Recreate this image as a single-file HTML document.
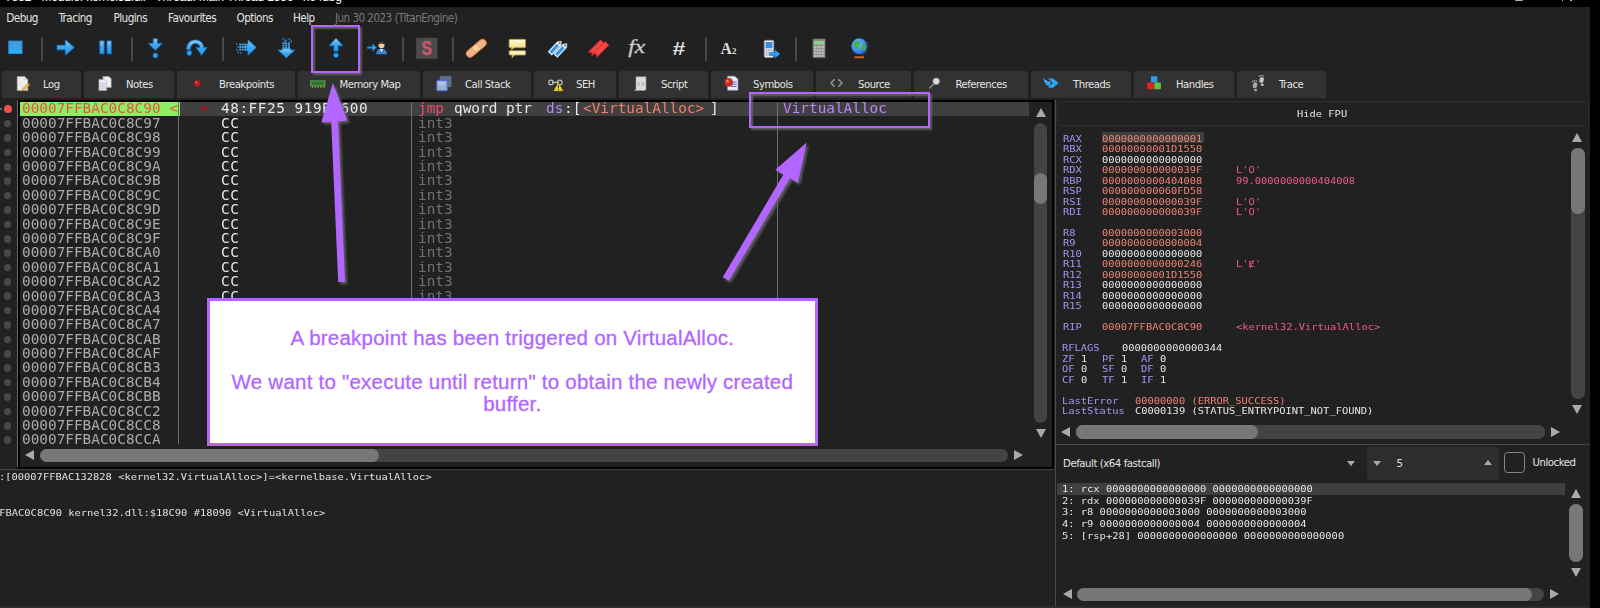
<!DOCTYPE html>
<html><head><meta charset="utf-8"><title>x64dbg</title>
<style>
html,body{margin:0;padding:0}
body{width:1600px;height:608px;overflow:hidden;position:relative;background:#212121;font-family:"DejaVu Sans Condensed","DejaVu Sans","Liberation Sans",sans-serif;font-stretch:condensed;color:#e0e0e0}
.a{position:absolute}
.ui{font-size:11.3px;letter-spacing:-0.45px;white-space:nowrap;color:#e4e4e4}
.m{font-family:"DejaVu Sans Mono","Liberation Mono",monospace;white-space:pre}
.d{font-size:13.3px;letter-spacing:0;transform:scaleX(1.0816);transform-origin:0 0;line-height:14.39px;height:14.39px}
.r{font-size:9.5px;letter-spacing:0;transform:scaleX(1.0963);transform-origin:0 0;line-height:10.4px;height:10.4px}
.tab{position:absolute;top:70.8px;height:27.1px;background:#323232;border-radius:3px 3px 0 0}
.tab span{position:absolute;top:7px}
.sep{position:absolute;top:37px;width:2px;height:24px;background:#484848;margin-left:-0.5px}
.vl{position:absolute;width:1px;background:#6e6e6e}
.bul{position:absolute;left:3.6px;width:7.6px;height:7.6px;border-radius:50%;background:#484848}
.tri{position:absolute;width:0;height:0}
</style></head><body>

<div class="a" style="left:0;top:0;width:1600px;height:7.4px;background:#000;overflow:hidden"><div class="a" style="left:5.3px;top:-9.6px;font:12px 'Liberation Sans',sans-serif;color:#fff;white-space:nowrap;line-height:14px;letter-spacing:-0.17px">7852 - Module: kernel32.dll - Thread: Main Thread 1556 - x64dbg</div></div>
<div class="a" style="left:1515px;top:0;width:8px;height:1.3px;background:#b0b0b0;border-radius:0 0 1px 1px"></div><div class="a" style="left:1561.8px;top:0;width:1.3px;height:1px;background:#bbb"></div><div class="a" style="left:1570.4px;top:0;width:1.3px;height:1px;background:#bbb"></div>
<div class="a" style="left:1590px;top:0;width:10px;height:608px;background:#000"></div>
<div class="a ui" style="left:6.3px;top:10.7px;font-size:11.6px;letter-spacing:-0.55px;line-height:15px">Debug</div>
<div class="a ui" style="left:58.5px;top:10.7px;font-size:11.6px;letter-spacing:-0.55px;line-height:15px">Tracing</div>
<div class="a ui" style="left:113.5px;top:10.7px;font-size:11.6px;letter-spacing:-0.55px;line-height:15px">Plugins</div>
<div class="a ui" style="left:168px;top:10.7px;font-size:11.6px;letter-spacing:-0.55px;line-height:15px">Favourites</div>
<div class="a ui" style="left:236.5px;top:10.7px;font-size:11.6px;letter-spacing:-0.55px;line-height:15px">Options</div>
<div class="a ui" style="left:293px;top:10.7px;font-size:11.6px;letter-spacing:-0.55px;line-height:15px">Help</div>
<div class="a ui" style="left:335px;top:10.7px;font-size:11.6px;letter-spacing:-0.55px;line-height:15px;color:#7a7a7a">Jun 30 2023 (TitanEngine)</div>
<div class="sep" style="left:41px"></div>
<div class="sep" style="left:131px"></div>
<div class="sep" style="left:222px"></div>
<div class="sep" style="left:402px"></div>
<div class="sep" style="left:452px"></div>
<div class="sep" style="left:705px"></div>
<div class="sep" style="left:795px"></div>
<!--ICONS-->
<div class="tab" style="left:2px;width:79px"><span class="ui" style="left:41px;font-size:11.2px">Log</span></div>
<div class="tab" style="left:84px;width:90px"><span class="ui" style="left:42px;font-size:11.2px">Notes</span></div>
<div class="tab" style="left:177px;width:117.5px"><span class="ui" style="left:42px;font-size:11.2px">Breakpoints</span></div>
<div class="tab" style="left:297.5px;width:122.5px"><span class="ui" style="left:42.0px;font-size:11.2px">Memory Map</span></div>
<div class="tab" style="left:423px;width:108px"><span class="ui" style="left:42px;font-size:11.2px">Call Stack</span></div>
<div class="tab" style="left:534px;width:82px"><span class="ui" style="left:42px;font-size:11.2px">SEH</span></div>
<div class="tab" style="left:619px;width:89px"><span class="ui" style="left:42px;font-size:11.2px">Script</span></div>
<div class="tab" style="left:711px;width:101.5px"><span class="ui" style="left:42px;font-size:11.2px">Symbols</span></div>
<div class="tab" style="left:815.5px;width:95.5px"><span class="ui" style="left:42.5px;font-size:11.2px">Source</span></div>
<div class="tab" style="left:914px;width:113.5px"><span class="ui" style="left:41.5px;font-size:11.2px">References</span></div>
<div class="tab" style="left:1030.5px;width:100.0px"><span class="ui" style="left:42.5px;font-size:11.2px">Threads</span></div>
<div class="tab" style="left:1133.5px;width:100.5px"><span class="ui" style="left:42.5px;font-size:11.2px">Handles</span></div>
<div class="tab" style="left:1237px;width:89px"><span class="ui" style="left:42px;font-size:11.2px">Trace</span></div>
<svg class="a" style="left:0;top:0" width="1600" height="100" viewBox="0 0 1600 100">
<defs>
<linearGradient id="gb" x1="0" y1="0" x2="0" y2="1"><stop offset="0" stop-color="#8fd0fa"/><stop offset="0.5" stop-color="#3fa6ee"/><stop offset="1" stop-color="#1a9bf5"/></linearGradient>
<linearGradient id="gs" x1="0" y1="0" x2="0" y2="1"><stop offset="0" stop-color="#4a9bdc"/><stop offset="0.45" stop-color="#3a9fe8"/><stop offset="1" stop-color="#2bb6ff"/></linearGradient>
<linearGradient id="gy" x1="0" y1="0" x2="0" y2="1"><stop offset="0" stop-color="#fdfbd8"/><stop offset="1" stop-color="#e9dc7a"/></linearGradient>
<radialGradient id="gg" cx="0.4" cy="0.35" r="0.7"><stop offset="0" stop-color="#7cc8ff"/><stop offset="1" stop-color="#1565d8"/></radialGradient>
</defs>
<rect x="8.7" y="41" width="13.4" height="12.7" fill="url(#gs)" stroke="#2a86d0" stroke-width="0.8"/>
<path d="M57 45.2 H65.3 V39.8 L74.3 47.5 L65.3 55.2 V49.8 H57 Z" fill="url(#gb)" stroke="#1874c4" stroke-width="0.8" stroke-linejoin="round"/>
<rect x="99.8" y="40.9" width="4.3" height="12.9" fill="url(#gb)" stroke="#1874c4" stroke-width="0.8" stroke-linejoin="round"/><rect x="107" y="40.9" width="4.3" height="12.9" fill="url(#gb)" stroke="#1874c4" stroke-width="0.8" stroke-linejoin="round"/>
<path d="M153.2 38.8 H157.3 V43.4 H162.2 L155.25 50.6 L148.3 43.4 H153.2 Z" fill="url(#gb)" stroke="#1874c4" stroke-width="0.8" stroke-linejoin="round"/><circle cx="155.4" cy="55.5" r="2.4" fill="#2aa5f8" stroke="#1874c4" stroke-width="0.8" stroke-linejoin="round"/>
<path d="M186.6 49.6 C186.6 43.5 190.4 39.9 195.3 39.9 C200 39.9 203.4 43 203.7 47.6 L207 47.6 L201.6 55.2 L196.2 47.6 L200 47.6 C199.8 45 198 43.6 195.3 43.6 C192.4 43.6 190.4 45.9 190.4 49.6 Z" fill="url(#gb)" stroke="#1874c4" stroke-width="0.8" stroke-linejoin="round"/><circle cx="189.3" cy="53" r="2.4" fill="#2aa5f8" stroke="#1874c4" stroke-width="0.8" stroke-linejoin="round"/>
<path d="M246.3 44 H248 V39.7 L256.3 47.5 L248 55.3 V51 H246.3 Z" fill="url(#gb)" stroke="#1874c4" stroke-width="0.8" stroke-linejoin="round"/>
<rect x="239.3" y="43.6" width="1.9" height="1.9" fill="#46a8f0"/>
<rect x="241.7" y="43.6" width="1.9" height="1.9" fill="#46a8f0"/>
<rect x="244.1" y="43.6" width="1.9" height="1.9" fill="#46a8f0"/>
<rect x="239.3" y="46.1" width="1.9" height="1.9" fill="#46a8f0"/>
<rect x="241.7" y="46.1" width="1.9" height="1.9" fill="#46a8f0"/>
<rect x="244.1" y="46.1" width="1.9" height="1.9" fill="#46a8f0"/>
<rect x="239.3" y="48.6" width="1.9" height="1.9" fill="#46a8f0"/>
<rect x="241.7" y="48.6" width="1.9" height="1.9" fill="#46a8f0"/>
<rect x="244.1" y="48.6" width="1.9" height="1.9" fill="#46a8f0"/>
<rect x="236" y="43.2" width="1.5" height="1.5" fill="#2f8fdc"/>
<rect x="237.2" y="46.2" width="1.5" height="1.5" fill="#2f8fdc"/>
<rect x="236.2" y="49" width="1.5" height="1.5" fill="#2f8fdc"/>
<rect x="237.6" y="51.6" width="1.5" height="1.5" fill="#2f8fdc"/>
<rect x="240" y="52.2" width="1.5" height="1.5" fill="#2f8fdc"/>
<path d="M282.2 50 V48.6 H290.6 V50 H294.7 L286.4 57.9 L278 50 Z" fill="url(#gb)" stroke="#1874c4" stroke-width="0.8" stroke-linejoin="round"/>
<rect x="282.5" y="42.3" width="2" height="1.9" fill="#46a8f0"/>
<rect x="285.2" y="42.3" width="2" height="1.9" fill="#46a8f0"/>
<rect x="287.9" y="42.3" width="2" height="1.9" fill="#46a8f0"/>
<rect x="282.5" y="44.6" width="2" height="1.9" fill="#46a8f0"/>
<rect x="285.2" y="44.6" width="2" height="1.9" fill="#46a8f0"/>
<rect x="287.9" y="44.6" width="2" height="1.9" fill="#46a8f0"/>
<rect x="282.5" y="46.9" width="2" height="1.9" fill="#46a8f0"/>
<rect x="285.2" y="46.9" width="2" height="1.9" fill="#46a8f0"/>
<rect x="287.9" y="46.9" width="2" height="1.9" fill="#46a8f0"/>
<rect x="282.6" y="38.2" width="1.6" height="1.6" fill="#2f8fdc"/>
<rect x="285.4" y="39.6" width="1.6" height="1.6" fill="#2f8fdc"/>
<rect x="288.6" y="38.6" width="1.6" height="1.6" fill="#2f8fdc"/>
<rect x="290.4" y="40.6" width="1.6" height="1.6" fill="#2f8fdc"/>
<rect x="284" y="40.6" width="1.6" height="1.6" fill="#2f8fdc"/>
<path d="M336 38.2 L343 45.8 H338.1 V51.3 H333.9 V45.8 H329 Z" fill="url(#gb)" stroke="#1874c4" stroke-width="0.8" stroke-linejoin="round"/><circle cx="336" cy="55.3" r="2.3" fill="#2aa5f8" stroke="#1874c4" stroke-width="0.8" stroke-linejoin="round"/>
<path d="M367.3 46.8 H372.5 V44 L376.5 47.6 L372.5 51.2 V48.4 H367.3 Z" fill="#2aa5f8" stroke="#1874c4" stroke-width="0.5"/>
<circle cx="381.5" cy="45.3" r="3" fill="#f3c9a0"/><path d="M378.3 44.6 C378.3 41.4 384.7 41.4 384.7 44.6 C383.5 43.3 379.5 43.3 378.3 44.6 Z" fill="#3a2a1c"/>
<path d="M376.3 54.3 C376.3 50 379 48.8 381.5 48.8 C384 48.8 386.8 50 386.8 54.3 Z" fill="#3f83cf"/><path d="M380.2 48.9 L381.5 52.5 L382.8 48.9 Z" fill="#fff"/>
<rect x="416.2" y="37.8" width="21.3" height="21" fill="#4b4b4b"/>
<text transform="translate(426.6 55.3) scale(0.76 1)" x="0" y="0" text-anchor="middle" font-family="Liberation Sans,sans-serif" font-weight="bold" font-size="20.5" fill="#c4566a" stroke="#c4566a" stroke-width="0.6">S</text>
<g transform="rotate(-40 476.3 48.3)"><rect x="464.3" y="44.5" width="24" height="7.6" rx="3.8" fill="#f2b389" stroke="#c77b4e" stroke-width="0.9"/><rect x="473.2" y="45.3" width="6" height="6" fill="#f9cfa0" stroke="#e79a5d" stroke-width="0.5"/></g>
<path d="M510 39.3 H524.7 Q525.6 39.3 525.6 40.2 V46.8 Q525.6 47.7 524.7 47.7 H514 L511.3 50 L511.6 47.7 H510 Q509.1 47.7 509.1 46.8 V40.2 Q509.1 39.3 510 39.3 Z" fill="url(#gy)" stroke="#b98a2e" stroke-width="0.8"/>
<path d="M510 50.7 H524.7 Q525.6 50.7 525.6 51.6 V54.2 Q525.6 55.1 524.7 55.1 H514.5 L512 58 L512.2 55.1 H510 Q509.1 55.1 509.1 54.2 V51.6 Q509.1 50.7 510 50.7 Z" fill="url(#gy)" stroke="#b98a2e" stroke-width="0.8"/>
<g transform="translate(0,0.0) rotate(-47 555 48)"><path d="M547.5 45.4 H561 L564.3 48 L561 50.6 H547.5 Z" fill="#eef4fa" stroke="#c8d3de" stroke-width="0.5"/><rect x="548.6" y="46.5" width="10.8" height="3" fill="#2b95e8"/><circle cx="561.7" cy="48" r="0.9" fill="#555"/></g>
<g transform="translate(5.6,2.352) rotate(-47 555 48)"><path d="M547.5 45.4 H561 L564.3 48 L561 50.6 H547.5 Z" fill="#eef4fa" stroke="#c8d3de" stroke-width="0.5"/><rect x="548.6" y="46.5" width="10.8" height="3" fill="#2b95e8"/><circle cx="561.7" cy="48" r="0.9" fill="#555"/></g>
<g transform="translate(0,0.0) rotate(-45 596 48)"><path d="M587.5 45.4 H605 V50.8 H587.5 L589.8 48.1 Z" fill="#f24848" stroke="#c61a1a" stroke-width="0.7"/></g>
<g transform="translate(4.6,1.6099999999999999) rotate(-45 596 48)"><path d="M587.5 45.4 H605 V50.8 H587.5 L589.8 48.1 Z" fill="#f24848" stroke="#c61a1a" stroke-width="0.7"/></g>
<text transform="translate(628.3 53) scale(1.2 1)" x="0" y="0" font-family="Liberation Serif,serif" font-style="italic" font-size="19.5" fill="#c8c8c8" stroke="#c8c8c8" stroke-width="0.35">fx</text>
<text transform="translate(672.6 55.2) scale(1.22 1)" x="0" y="0" font-family="Liberation Sans,sans-serif" font-weight="bold" font-size="19" fill="#dcdcdc">#</text>
<text x="720.5" y="54" font-family="Liberation Serif,serif" font-weight="bold" font-size="15.8" fill="#dedede">A</text><text x="732" y="54" font-family="Liberation Serif,serif" font-weight="bold" font-size="9" fill="#dedede">2</text>
<rect x="764.2" y="40.3" width="9.6" height="17.2" rx="1.4" fill="#e6e9ee" stroke="#8a8f99" stroke-width="0.8"/><rect x="765.6" y="42" width="6.8" height="6.2" fill="#3b8fe0"/>
<rect x="765.7" y="49.6" width="1.7" height="1.4" fill="#9aa0aa"/>
<rect x="768.2" y="49.6" width="1.7" height="1.4" fill="#9aa0aa"/>
<rect x="770.7" y="49.6" width="1.7" height="1.4" fill="#9aa0aa"/>
<rect x="765.7" y="51.9" width="1.7" height="1.4" fill="#9aa0aa"/>
<rect x="768.2" y="51.9" width="1.7" height="1.4" fill="#9aa0aa"/>
<rect x="770.7" y="51.9" width="1.7" height="1.4" fill="#9aa0aa"/>
<rect x="765.7" y="54.2" width="1.7" height="1.4" fill="#9aa0aa"/>
<rect x="768.2" y="54.2" width="1.7" height="1.4" fill="#9aa0aa"/>
<rect x="770.7" y="54.2" width="1.7" height="1.4" fill="#9aa0aa"/>
<path d="M769.8 52.6 H775 V50 L780 54 L775 58 V55.4 H769.8 Z" fill="#2aa5f8" stroke="#1874c4" stroke-width="0.6"/>
<rect x="812.7" y="38.7" width="12.8" height="19.3" rx="0.8" fill="#8e8e8e" stroke="#3a3a3a" stroke-width="0.9"/><rect x="813.8" y="41.2" width="10.6" height="3.2" fill="#8fd48a"/>
<rect x="813.9" y="45.8" width="2" height="2.2" fill="#b9b9b9"/>
<rect x="816.6" y="45.8" width="2" height="2.2" fill="#b9b9b9"/>
<rect x="819.3" y="45.8" width="2" height="2.2" fill="#b9b9b9"/>
<rect x="822.0" y="45.8" width="2" height="2.2" fill="#b9b9b9"/>
<rect x="813.9" y="48.8" width="2" height="2.2" fill="#b9b9b9"/>
<rect x="816.6" y="48.8" width="2" height="2.2" fill="#b9b9b9"/>
<rect x="819.3" y="48.8" width="2" height="2.2" fill="#b9b9b9"/>
<rect x="822.0" y="48.8" width="2" height="2.2" fill="#b9b9b9"/>
<rect x="813.9" y="51.8" width="2" height="2.2" fill="#b9b9b9"/>
<rect x="816.6" y="51.8" width="2" height="2.2" fill="#b9b9b9"/>
<rect x="819.3" y="51.8" width="2" height="2.2" fill="#b9b9b9"/>
<rect x="822.0" y="51.8" width="2" height="2.2" fill="#b9b9b9"/>
<rect x="813.9" y="54.8" width="2" height="2.2" fill="#b9b9b9"/>
<rect x="816.6" y="54.8" width="2" height="2.2" fill="#b9b9b9"/>
<rect x="819.3" y="54.8" width="2" height="2.2" fill="#b9b9b9"/>
<rect x="822.0" y="54.8" width="2" height="2.2" fill="#b9b9b9"/>
<circle cx="859.3" cy="46.3" r="8" fill="url(#gg)"/><path d="M855 41.5 C857 40 860 40.5 860.5 42.5 C861 44.5 858.5 45 858.5 47 C858.5 49 856.5 50 855.3 48.5 C854 47 853.5 43 855 41.5 Z" fill="#3db54a"/><path d="M862.5 44.5 C864.5 44 866.3 45.5 866 48 C865.6 50 863.6 51.3 862.6 50 C861.6 48.6 861.3 45 862.5 44.5 Z" fill="#3db54a"/><path d="M867 41 C870.5 46 868 54 861 55.5" fill="none" stroke="#333" stroke-width="1.3"/><rect x="854.3" y="56.3" width="10" height="2" rx="0.8" fill="#d2611e"/>
<path d="M17.2 76.6 H24.6 L27.8 79.8 V90.6 H17.2 Z" fill="#ececec" stroke="#a9a9a9" stroke-width="0.6"/><path d="M24.6 76.6 V79.8 H27.8 Z" fill="#c8c8c8"/><path d="M22 90.8 L22.9 88.3 L27.6 83.6 L29.3 85.3 L24.6 90 Z" fill="#e9c24a" stroke="#a98232" stroke-width="0.5"/><path d="M27.6 83.6 L28.5 82.7 L30.2 84.4 L29.3 85.3 Z" fill="#d9443c"/>
<path d="M103 76.6 H109 L111.2 78.8 V87.6 H103 Z" fill="#efefef" stroke="#a8a8a8" stroke-width="0.6"/><path d="M98.9 79.4 H104.6 L106.6 81.4 V90.6 H98.9 Z" fill="#ececf2" stroke="#a0a0a8" stroke-width="0.6"/>
<rect x="100" y="83.0" width="5.4" height="0.8" fill="#bcbcd4"/>
<rect x="100" y="84.8" width="5.4" height="0.8" fill="#bcbcd4"/>
<rect x="100" y="86.6" width="5.4" height="0.8" fill="#bcbcd4"/>
<rect x="100" y="88.4" width="5.4" height="0.8" fill="#bcbcd4"/>
<circle cx="197.4" cy="83.4" r="3.1" fill="#c4161b"/><circle cx="196.4" cy="82.3" r="1.1" fill="#ea5c60"/>
<rect x="310.6" y="80.8" width="14.4" height="5" fill="#357d33" stroke="#5fae56" stroke-width="0.7"/>
<rect x="312.7" y="82.2" width="2.6" height="2.2" fill="#2a6e28"/>
<rect x="316.5" y="82.2" width="2.6" height="2.2" fill="#2a6e28"/>
<rect x="320.3" y="82.2" width="2.6" height="2.2" fill="#2a6e28"/>
<rect x="311.6" y="86.3" width="1.4" height="1.3" fill="#c9c23a"/>
<rect x="314.5" y="86.3" width="1.4" height="1.3" fill="#c9c23a"/>
<rect x="317.40000000000003" y="86.3" width="1.4" height="1.3" fill="#c9c23a"/>
<rect x="320.3" y="86.3" width="1.4" height="1.3" fill="#c9c23a"/>
<rect x="323.20000000000005" y="86.3" width="1.4" height="1.3" fill="#c9c23a"/>
<rect x="440.2" y="76.3" width="11" height="10.6" rx="1" fill="#5d6f88" stroke="#6d7f9a" stroke-width="0.5"/><rect x="436.8" y="80.4" width="10.4" height="10.4" rx="1" fill="#9db1cd" stroke="#4c6ce0" stroke-width="1.1"/><rect x="438.2" y="81.8" width="7.6" height="3.6" fill="#c3d2e6" opacity="0.55"/>
<rect x="552" y="81.6" width="7" height="1.6" fill="#b4b4b4"/><circle cx="551" cy="82.4" r="2.3" fill="none" stroke="#bdbdbd" stroke-width="1.2"/><circle cx="559.8" cy="82.4" r="2.3" fill="none" stroke="#bdbdbd" stroke-width="1.2"/>
<path d="M558.4 82.6 L563.2 91 H553.6 Z" fill="#f2dc3c" stroke="#8f7a10" stroke-width="0.6" stroke-linejoin="round"/><rect x="557.9" y="85.2" width="1" height="3.2" fill="#222"/><rect x="557.9" y="89" width="1" height="1" fill="#222"/>
<path d="M636 76.8 H646 V88.6 C646 90 645.2 90.5 644.3 90.5 H634.4 C635.6 90.2 636 89.6 636 88.6 Z" fill="#d6ddd9" stroke="#9aa29e" stroke-width="0.6"/><path d="M639.6 82.3 L638 84.2 L639.6 86.1 M642.2 82.3 L643.8 84.2 L642.2 86.1" fill="none" stroke="#8d8d8d" stroke-width="0.9"/>
<path d="M727.6 76.2 H734.8 L737.9 79.3 V90.2 H727.6 Z" fill="#e9ecf6" stroke="#a5abc4" stroke-width="0.6"/>
<rect x="731" y="81.6" width="5.6" height="1" fill="#4a72d8"/>
<rect x="731" y="83.8" width="5.6" height="1" fill="#4a72d8"/>
<rect x="731" y="86.0" width="5.6" height="1" fill="#4a72d8"/>
<circle cx="728.8" cy="82.4" r="4.3" fill="#cf2a2a"/><circle cx="727.5" cy="81" r="1.5" fill="#ee7a7a"/>
<path d="M834.6 79.3 L831 83 L834.6 86.7 M838.4 79.3 L842 83 L838.4 86.7" fill="none" stroke="#9a9a9a" stroke-width="1.4"/>
<circle cx="936.2" cy="81.3" r="3.3" fill="#d8dde6" stroke="#9a9a9a" stroke-width="0.9"/><path d="M933.8 84 L929.6 88" stroke="#8a8a8a" stroke-width="1.6" stroke-linecap="round"/>
<path d="M1043.4 77.4 C1045 80.6 1047.2 81.8 1050.5 81.6 L1050.5 86.2 C1046.4 86.4 1043.8 83.4 1043.4 77.4 Z" fill="#2a9cf0"/><path d="M1048.2 78.4 H1053 L1058.6 83 L1053 87.7 H1048.2 L1052.6 83 Z" fill="#2aa4f6"/><path d="M1045 79.6 C1046.6 81.6 1048 82.4 1050 82.6" fill="none" stroke="#8cd0fb" stroke-width="0.8"/>
<rect x="1151" y="76.2" width="6.4" height="6.4" rx="0.8" fill="#2f9eea"/><rect x="1147.2" y="82.6" width="6.6" height="6.6" rx="0.8" fill="#e0232b"/><rect x="1154.3" y="82.6" width="6.6" height="6.6" rx="0.8" fill="#63c33b"/>
<ellipse cx="1255" cy="85.2" rx="2.2" ry="3.1" fill="#a8a8a8" transform="rotate(12 1255 85.2)"/><ellipse cx="1255.6" cy="90" rx="1.5" ry="1.3" fill="#a8a8a8"/><ellipse cx="1261.6" cy="80" rx="2.2" ry="3.1" fill="#c4c4c4" transform="rotate(12 1261.6 80)"/><ellipse cx="1262.3" cy="84.8" rx="1.5" ry="1.3" fill="#c4c4c4"/>
<circle cx="1252.6" cy="81.4" r="0.75" fill="#b8b8b8"/>
<circle cx="1254.4" cy="80.7" r="0.75" fill="#b8b8b8"/>
<circle cx="1256.3" cy="80.9" r="0.75" fill="#b8b8b8"/>
<circle cx="1259.3" cy="76.3" r="0.75" fill="#b8b8b8"/>
<circle cx="1261.1" cy="75.6" r="0.75" fill="#b8b8b8"/>
<circle cx="1263" cy="75.8" r="0.75" fill="#b8b8b8"/>
</svg>
<div class="a" style="left:17px;top:100.4px;width:1037px;height:1.6px;background:#000"></div>
<div class="a" style="left:17px;top:100px;width:1px;height:368px;background:#666"></div>
<div class="a" style="left:18px;top:100px;width:2px;height:368px;background:#000"></div>
<div class="a" style="left:1052.4px;top:100px;width:1.6px;height:369px;background:#000"></div>
<div class="a" style="left:17px;top:467px;width:1037px;height:2px;background:#000"></div>
<div class="a" style="left:0;top:469px;width:1054px;height:1px;background:#444"></div>
<div class="a" style="left:1055px;top:100px;width:1px;height:508px;background:#4c4c4c"></div>
<div class="a" style="left:0;top:107.6px;width:1.5px;height:2.2px;background:#6a6a6a"></div>
<div class="a" style="left:180px;top:102px;width:849px;height:14.4px;background:#404040"></div>
<div class="a" style="left:20px;top:102px;width:160px;height:14.4px;background:#8cf062"></div>
<div class="vl" style="left:178px;top:102px;height:341.5px"></div>
<div class="vl" style="left:411px;top:102px;height:341.5px"></div>
<div class="vl" style="left:777px;top:102px;height:341.5px"></div>
<div class="a" style="left:0;top:102px;width:1030px;height:341.5px;overflow:hidden">
<div class="a" style="left:3.5px;top:3px;width:8px;height:8px;border-radius:50%;background:#f05252"></div>
<div class="a m d" style="left:22px;top:0.45px;color:#f0504a">00007FFBAC0C8C90 &lt;</div>
<div class="a m d" style="left:200.3px;top:4.30px;color:#c80000;font-weight:bold">^</div>
<div class="a m d" style="left:220.8px;top:0.45px;color:#e8e8e8;letter-spacing:0.5px">48:FF25 919B0600</div>
<div class="a m d" style="left:418.3px;top:0.45px;color:#f04a6e">jmp</div>
<div class="a m d" style="left:454px;top:0.45px;color:#e8e8e8">qword ptr</div>
<div class="a m d" style="left:546px;top:0.45px;color:#a88cf5">ds</div>
<div class="a m d" style="left:564.4px;top:0.45px;color:#e8e8e8">:[</div>
<div class="a m d" style="left:583.3px;top:0.45px;color:#f57f6d">&lt;VirtualAlloc&gt;</div>
<div class="a m d" style="left:710.4px;top:0.45px;color:#e8e8e8">]</div>
<div class="a m d" style="left:782.7px;top:0.45px;color:#bb86f7">VirtualAlloc</div>
<div class="bul" style="top:17.79px"></div>
<div class="a m d" style="left:22px;top:14.84px;color:#ababab">00007FFBAC0C8C97</div>
<div class="a m d" style="left:221.2px;top:14.84px;color:#e8e8e8;letter-spacing:0.55px">CC</div>
<div class="a m d" style="left:418.3px;top:14.84px;color:#707070">int3</div>
<div class="bul" style="top:32.18px"></div>
<div class="a m d" style="left:22px;top:29.23px;color:#ababab">00007FFBAC0C8C98</div>
<div class="a m d" style="left:221.2px;top:29.23px;color:#e8e8e8;letter-spacing:0.55px">CC</div>
<div class="a m d" style="left:418.3px;top:29.23px;color:#707070">int3</div>
<div class="bul" style="top:46.57px"></div>
<div class="a m d" style="left:22px;top:43.62px;color:#ababab">00007FFBAC0C8C99</div>
<div class="a m d" style="left:221.2px;top:43.62px;color:#e8e8e8;letter-spacing:0.55px">CC</div>
<div class="a m d" style="left:418.3px;top:43.62px;color:#707070">int3</div>
<div class="bul" style="top:60.96px"></div>
<div class="a m d" style="left:22px;top:58.01px;color:#ababab">00007FFBAC0C8C9A</div>
<div class="a m d" style="left:221.2px;top:58.01px;color:#e8e8e8;letter-spacing:0.55px">CC</div>
<div class="a m d" style="left:418.3px;top:58.01px;color:#707070">int3</div>
<div class="bul" style="top:75.35px"></div>
<div class="a m d" style="left:22px;top:72.40px;color:#ababab">00007FFBAC0C8C9B</div>
<div class="a m d" style="left:221.2px;top:72.40px;color:#e8e8e8;letter-spacing:0.55px">CC</div>
<div class="a m d" style="left:418.3px;top:72.40px;color:#707070">int3</div>
<div class="bul" style="top:89.74px"></div>
<div class="a m d" style="left:22px;top:86.79px;color:#ababab">00007FFBAC0C8C9C</div>
<div class="a m d" style="left:221.2px;top:86.79px;color:#e8e8e8;letter-spacing:0.55px">CC</div>
<div class="a m d" style="left:418.3px;top:86.79px;color:#707070">int3</div>
<div class="bul" style="top:104.13px"></div>
<div class="a m d" style="left:22px;top:101.18px;color:#ababab">00007FFBAC0C8C9D</div>
<div class="a m d" style="left:221.2px;top:101.18px;color:#e8e8e8;letter-spacing:0.55px">CC</div>
<div class="a m d" style="left:418.3px;top:101.18px;color:#707070">int3</div>
<div class="bul" style="top:118.52px"></div>
<div class="a m d" style="left:22px;top:115.57px;color:#ababab">00007FFBAC0C8C9E</div>
<div class="a m d" style="left:221.2px;top:115.57px;color:#e8e8e8;letter-spacing:0.55px">CC</div>
<div class="a m d" style="left:418.3px;top:115.57px;color:#707070">int3</div>
<div class="bul" style="top:132.91px"></div>
<div class="a m d" style="left:22px;top:129.96px;color:#ababab">00007FFBAC0C8C9F</div>
<div class="a m d" style="left:221.2px;top:129.96px;color:#e8e8e8;letter-spacing:0.55px">CC</div>
<div class="a m d" style="left:418.3px;top:129.96px;color:#707070">int3</div>
<div class="bul" style="top:147.30px"></div>
<div class="a m d" style="left:22px;top:144.35px;color:#ababab">00007FFBAC0C8CA0</div>
<div class="a m d" style="left:221.2px;top:144.35px;color:#e8e8e8;letter-spacing:0.55px">CC</div>
<div class="a m d" style="left:418.3px;top:144.35px;color:#707070">int3</div>
<div class="bul" style="top:161.69px"></div>
<div class="a m d" style="left:22px;top:158.74px;color:#ababab">00007FFBAC0C8CA1</div>
<div class="a m d" style="left:221.2px;top:158.74px;color:#e8e8e8;letter-spacing:0.55px">CC</div>
<div class="a m d" style="left:418.3px;top:158.74px;color:#707070">int3</div>
<div class="bul" style="top:176.08px"></div>
<div class="a m d" style="left:22px;top:173.13px;color:#ababab">00007FFBAC0C8CA2</div>
<div class="a m d" style="left:221.2px;top:173.13px;color:#e8e8e8;letter-spacing:0.55px">CC</div>
<div class="a m d" style="left:418.3px;top:173.13px;color:#707070">int3</div>
<div class="bul" style="top:190.47px"></div>
<div class="a m d" style="left:22px;top:187.52px;color:#ababab">00007FFBAC0C8CA3</div>
<div class="a m d" style="left:221.2px;top:187.52px;color:#e8e8e8;letter-spacing:0.55px">CC</div>
<div class="a m d" style="left:418.3px;top:187.52px;color:#707070">int3</div>
<div class="bul" style="top:204.86px"></div>
<div class="a m d" style="left:22px;top:201.91px;color:#ababab">00007FFBAC0C8CA4</div>
<div class="bul" style="top:219.25px"></div>
<div class="a m d" style="left:22px;top:216.30px;color:#ababab">00007FFBAC0C8CA7</div>
<div class="bul" style="top:233.64px"></div>
<div class="a m d" style="left:22px;top:230.69px;color:#ababab">00007FFBAC0C8CAB</div>
<div class="bul" style="top:248.03px"></div>
<div class="a m d" style="left:22px;top:245.08px;color:#ababab">00007FFBAC0C8CAF</div>
<div class="bul" style="top:262.42px"></div>
<div class="a m d" style="left:22px;top:259.47px;color:#ababab">00007FFBAC0C8CB3</div>
<div class="bul" style="top:276.81px"></div>
<div class="a m d" style="left:22px;top:273.86px;color:#ababab">00007FFBAC0C8CB4</div>
<div class="bul" style="top:291.20px"></div>
<div class="a m d" style="left:22px;top:288.25px;color:#ababab">00007FFBAC0C8CBB</div>
<div class="bul" style="top:305.59px"></div>
<div class="a m d" style="left:22px;top:302.64px;color:#ababab">00007FFBAC0C8CC2</div>
<div class="bul" style="top:319.98px"></div>
<div class="a m d" style="left:22px;top:317.03px;color:#ababab">00007FFBAC0C8CC8</div>
<div class="bul" style="top:334.37px"></div>
<div class="a m d" style="left:22px;top:331.42px;color:#ababab">00007FFBAC0C8CCA</div>
</div>
<div class="a" style="left:1034.3px;top:122.5px;width:13px;height:300px;border-radius:6.5px;background:#444"></div>
<div class="a" style="left:1034.3px;top:172.6px;width:13px;height:31.2px;border-radius:6.5px;background:#777"></div>
<div class="tri" style="left:1035.5px;top:107.5px;border-left:5.5px solid transparent;border-right:5.5px solid transparent;border-bottom:9.5px solid #aaa"></div>
<div class="tri" style="left:1035.5px;top:428.5px;border-left:5.5px solid transparent;border-right:5.5px solid transparent;border-top:9.5px solid #aaa"></div>
<div class="a" style="left:40px;top:448.5px;width:968px;height:13.5px;border-radius:6.5px;background:#444"></div>
<div class="a" style="left:40px;top:448.5px;width:339px;height:13.5px;border-radius:6.5px;background:#777"></div>
<div class="tri" style="left:25px;top:450px;border-top:5.5px solid transparent;border-bottom:5.5px solid transparent;border-right:9.5px solid #aaa"></div>
<div class="tri" style="left:1013.5px;top:450px;border-top:5.5px solid transparent;border-bottom:5.5px solid transparent;border-left:9.5px solid #aaa"></div>
<div class="a m r" style="left:-1.5px;top:472.4px;color:#e0e0e0">:[00007FFBAC132828 &lt;kernel32.VirtualAlloc&gt;]=&lt;kernelbase.VirtualAlloc&gt;</div>
<div class="a m r" style="left:-6.8px;top:508.1px;color:#e0e0e0">FFBAC0C8C90 kernel32.dll:$18C90 #18090 &lt;VirtualAlloc&gt;</div>
<div class="a" style="left:1057px;top:101px;width:531px;height:24.5px;border:1px solid #2b2e33;border-radius:2px;box-sizing:border-box;width:531.8px"></div>
<div class="a m r" style="left:1296.5px;top:109.3px;color:#e4e4e4">Hide FPU</div>
<div class="a" style="left:1101.5px;top:132.30px;width:102px;height:10.4px;background:#3f3f3f"></div>
<div class="a m r" style="left:1062.9px;top:133.60px;color:#aa93f3">RAX</div>
<div class="a m r" style="left:1102px;top:133.60px;color:#f08272">0000000000000001</div>
<div class="a m r" style="left:1062.9px;top:144.08px;color:#aa93f3">RBX</div>
<div class="a m r" style="left:1102px;top:144.08px;color:#f08272">00000000001D1550</div>
<div class="a m r" style="left:1062.9px;top:154.57px;color:#aa93f3">RCX</div>
<div class="a m r" style="left:1102px;top:154.57px;color:#e6e6e6">0000000000000000</div>
<div class="a m r" style="left:1062.9px;top:165.06px;color:#aa93f3">RDX</div>
<div class="a m r" style="left:1102px;top:165.06px;color:#f08272">000000000000039F</div>
<div class="a m r" style="left:1235.5px;top:165.06px;color:#f05a8c">L&#x27;Ο&#x27;</div>
<div class="a m r" style="left:1062.9px;top:175.54px;color:#aa93f3">RBP</div>
<div class="a m r" style="left:1102px;top:175.54px;color:#f08272">0000000000404008</div>
<div class="a m r" style="left:1235.5px;top:175.54px;color:#f05a8c">99.0000000000404008</div>
<div class="a m r" style="left:1062.9px;top:186.02px;color:#aa93f3">RSP</div>
<div class="a m r" style="left:1102px;top:186.02px;color:#f08272">000000000060FD58</div>
<div class="a m r" style="left:1062.9px;top:196.51px;color:#aa93f3">RSI</div>
<div class="a m r" style="left:1102px;top:196.51px;color:#f08272">000000000000039F</div>
<div class="a m r" style="left:1235.5px;top:196.51px;color:#f05a8c">L&#x27;Ο&#x27;</div>
<div class="a m r" style="left:1062.9px;top:207.00px;color:#aa93f3">RDI</div>
<div class="a m r" style="left:1102px;top:207.00px;color:#f08272">000000000000039F</div>
<div class="a m r" style="left:1235.5px;top:207.00px;color:#f05a8c">L&#x27;Ο&#x27;</div>
<div class="a m r" style="left:1062.9px;top:227.96px;color:#aa93f3">R8</div>
<div class="a m r" style="left:1102px;top:227.96px;color:#f08272">0000000000003000</div>
<div class="a m r" style="left:1062.9px;top:238.45px;color:#aa93f3">R9</div>
<div class="a m r" style="left:1102px;top:238.45px;color:#f08272">0000000000000004</div>
<div class="a m r" style="left:1062.9px;top:248.94px;color:#aa93f3">R10</div>
<div class="a m r" style="left:1102px;top:248.94px;color:#e6e6e6">0000000000000000</div>
<div class="a m r" style="left:1062.9px;top:259.42px;color:#aa93f3">R11</div>
<div class="a m r" style="left:1102px;top:259.42px;color:#f08272">0000000000000246</div>
<div class="a m r" style="left:1235.5px;top:259.42px;color:#f05a8c">L&#x27;Ɇ&#x27;</div>
<div class="a m r" style="left:1062.9px;top:269.90px;color:#aa93f3">R12</div>
<div class="a m r" style="left:1102px;top:269.90px;color:#f08272">00000000001D1550</div>
<div class="a m r" style="left:1062.9px;top:280.39px;color:#aa93f3">R13</div>
<div class="a m r" style="left:1102px;top:280.39px;color:#e6e6e6">0000000000000000</div>
<div class="a m r" style="left:1062.9px;top:290.88px;color:#aa93f3">R14</div>
<div class="a m r" style="left:1102px;top:290.88px;color:#e6e6e6">0000000000000000</div>
<div class="a m r" style="left:1062.9px;top:301.36px;color:#aa93f3">R15</div>
<div class="a m r" style="left:1102px;top:301.36px;color:#e6e6e6">0000000000000000</div>
<div class="a m r" style="left:1062.9px;top:322.33px;color:#aa93f3">RIP</div>
<div class="a m r" style="left:1102px;top:322.33px;color:#f08272">00007FFBAC0C8C90</div>
<div class="a m r" style="left:1235.5px;top:322.33px;color:#f05a8c">&lt;kernel32.VirtualAlloc&gt;</div>
<div class="a m r" style="left:1062.3px;top:343.30px;color:#aa93f3">RFLAGS</div>
<div class="a m r" style="left:1121.5px;top:343.30px;color:#e6e6e6">0000000000000344</div>
<div class="a m r" style="left:1062.3px;top:353.78px;color:#aa93f3">ZF</div>
<div class="a m r" style="left:1081.1px;top:353.78px;color:#e6e6e6">1</div>
<div class="a m r" style="left:1101.8px;top:353.78px;color:#aa93f3">PF</div>
<div class="a m r" style="left:1120.6px;top:353.78px;color:#e6e6e6">1</div>
<div class="a m r" style="left:1141.3px;top:353.78px;color:#aa93f3">AF</div>
<div class="a m r" style="left:1160.1px;top:353.78px;color:#e6e6e6">0</div>
<div class="a m r" style="left:1062.3px;top:364.27px;color:#aa93f3">OF</div>
<div class="a m r" style="left:1081.1px;top:364.27px;color:#e6e6e6">0</div>
<div class="a m r" style="left:1101.8px;top:364.27px;color:#aa93f3">SF</div>
<div class="a m r" style="left:1120.6px;top:364.27px;color:#e6e6e6">0</div>
<div class="a m r" style="left:1141.3px;top:364.27px;color:#aa93f3">DF</div>
<div class="a m r" style="left:1160.1px;top:364.27px;color:#e6e6e6">0</div>
<div class="a m r" style="left:1062.3px;top:374.75px;color:#aa93f3">CF</div>
<div class="a m r" style="left:1081.1px;top:374.75px;color:#e6e6e6">0</div>
<div class="a m r" style="left:1101.8px;top:374.75px;color:#aa93f3">TF</div>
<div class="a m r" style="left:1120.6px;top:374.75px;color:#e6e6e6">1</div>
<div class="a m r" style="left:1141.3px;top:374.75px;color:#aa93f3">IF</div>
<div class="a m r" style="left:1160.1px;top:374.75px;color:#e6e6e6">1</div>
<div class="a m r" style="left:1062.3px;top:395.73px;color:#aa93f3">LastError</div>
<div class="a m r" style="left:1134.5px;top:395.73px;color:#f08272">00000000 (ERROR_SUCCESS)</div>
<div class="a m r" style="left:1062.3px;top:406.21px;color:#aa93f3">LastStatus</div>
<div class="a m r" style="left:1134.5px;top:406.21px;color:#e6e6e6">C0000139 (STATUS_ENTRYPOINT_NOT_FOUND)</div>
<div class="a" style="left:1571px;top:147.5px;width:13.5px;height:251.5px;border-radius:6.5px;background:#444"></div>
<div class="a" style="left:1571px;top:147.5px;width:13.5px;height:66px;border-radius:6.5px;background:#777"></div>
<div class="tri" style="left:1572px;top:132.5px;border-left:5.5px solid transparent;border-right:5.5px solid transparent;border-bottom:9.5px solid #aaa"></div>
<div class="tri" style="left:1572px;top:405px;border-left:5.5px solid transparent;border-right:5.5px solid transparent;border-top:9.5px solid #aaa"></div>
<div class="a" style="left:1076px;top:425px;width:469px;height:13.5px;border-radius:6.5px;background:#444"></div>
<div class="a" style="left:1076px;top:425px;width:182px;height:13.5px;border-radius:6.5px;background:#777"></div>
<div class="tri" style="left:1061px;top:426.5px;border-top:5.5px solid transparent;border-bottom:5.5px solid transparent;border-right:9.5px solid #aaa"></div>
<div class="tri" style="left:1550.5px;top:426.5px;border-top:5.5px solid transparent;border-bottom:5.5px solid transparent;border-left:9.5px solid #aaa"></div>
<div class="a" style="left:1056px;top:444px;width:534px;height:1px;background:#4a4a4a"></div>
<div class="a ui" style="left:1063px;top:457px;line-height:14px">Default (x64 fastcall)</div>
<div class="tri" style="left:1347px;top:460.5px;border-left:4.7px solid transparent;border-right:4.7px solid transparent;border-top:5.5px solid #aaa"></div>
<div class="a" style="left:1366.5px;top:446.5px;width:132px;height:33.5px;border-radius:3px;background:#2e2e2e"></div>
<div class="tri" style="left:1373px;top:460.5px;border-left:4.7px solid transparent;border-right:4.7px solid transparent;border-top:5.5px solid #aaa"></div>
<div class="tri" style="left:1484px;top:460px;border-left:4.7px solid transparent;border-right:4.7px solid transparent;border-bottom:5.5px solid #aaa"></div>
<div class="a ui" style="left:1396.5px;top:457.4px;line-height:14px">5</div>
<div class="a" style="left:1504px;top:451.5px;width:21px;height:21px;box-sizing:border-box;border:1.7px solid #868686;border-radius:3.5px;background:#212121"></div>
<div class="a ui" style="left:1532.5px;top:456px;line-height:14px">Unlocked</div>
<div class="a" style="left:1057px;top:483px;width:507.5px;height:11.5px;background:#3f3f3f"></div>
<div class="a m r" style="left:1062.2px;top:483.70px;color:#e6e6e6">1: rcx 0000000000000000 0000000000000000</div>
<div class="a m r" style="left:1062.2px;top:495.53px;color:#e6e6e6">2: rdx 000000000000039F 000000000000039F</div>
<div class="a m r" style="left:1062.2px;top:507.36px;color:#e6e6e6">3: r8 0000000000003000 0000000000003000</div>
<div class="a m r" style="left:1062.2px;top:519.19px;color:#e6e6e6">4: r9 0000000000000004 0000000000000004</div>
<div class="a m r" style="left:1062.2px;top:531.02px;color:#e6e6e6">5: [rsp+28] 0000000000000000 0000000000000000</div>
<div class="a" style="left:1569px;top:503.5px;width:13.5px;height:58px;border-radius:6.5px;background:#777"></div>
<div class="tri" style="left:1570.5px;top:489px;border-left:5.5px solid transparent;border-right:5.5px solid transparent;border-bottom:9.5px solid #aaa"></div>
<div class="tri" style="left:1570.5px;top:567.5px;border-left:5.5px solid transparent;border-right:5.5px solid transparent;border-top:9.5px solid #aaa"></div>
<div class="a" style="left:1077px;top:587.5px;width:467px;height:13.5px;border-radius:6.5px;background:#444"></div>
<div class="a" style="left:1077px;top:587.5px;width:455px;height:13.5px;border-radius:6.5px;background:#777"></div>
<div class="tri" style="left:1062.5px;top:589px;border-top:5.5px solid transparent;border-bottom:5.5px solid transparent;border-right:9.5px solid #aaa"></div>
<div class="tri" style="left:1549.5px;top:589px;border-top:5.5px solid transparent;border-bottom:5.5px solid transparent;border-left:9.5px solid #aaa"></div>
<div class="a" style="left:0;top:606px;width:1590px;height:2px;background:#2c2c2c"></div>
<div class="a" style="left:311.3px;top:25.4px;width:49.1px;height:47.3px;box-sizing:border-box;border:2.5px solid #b266ff;box-shadow:2px 2px 1.5px rgba(110,110,110,.75),inset 2px 2px 1.5px rgba(110,110,110,.75)"></div>
<div class="a" style="left:749px;top:92.1px;width:180.8px;height:35.8px;box-sizing:border-box;border:2.4px solid #b266ff;box-shadow:2px 2px 1.5px rgba(110,110,110,.75),inset 2px 2px 1.5px rgba(110,110,110,.75)"></div>
<div class="a" style="left:206.5px;top:298.3px;width:611.7px;height:148.2px;box-sizing:border-box;border:3px solid #b266ff;background:#fff"></div>
<div class="a" style="left:209.5px;top:326.6px;width:605.7px;-webkit-text-stroke:0.3px #b266ff;text-align:center;font:20.5px/22.3px 'Liberation Sans',sans-serif;letter-spacing:0.23px;color:#b266ff">A breakpoint has been triggered on VirtualAlloc.<br><br>We want to "execute until return" to obtain the newly created<br>buffer.</div>
<svg class="a" style="left:0;top:0" width="1600" height="608" viewBox="0 0 1600 608">
<defs><filter id="bl" x="-20%" y="-20%" width="140%" height="140%"><feGaussianBlur stdDeviation="0.9"/></filter></defs>
<g fill="#5c5c5c" transform="translate(2.2,2.2)" filter="url(#bl)"><polygon points="332.8,82.9 321.3,122.4 331.2,122 338.2,282 345,281.7 338.1,121.6 347.4,120.6"/>
<polygon points="806.7,142.6 775.3,169.7 783.4,174.6 722.7,277.3 728.7,280.8 790,178.3 797.9,182.9"/></g>
<g fill="#b266ff"><polygon points="332.8,82.9 321.3,122.4 331.2,122 338.2,282 345,281.7 338.1,121.6 347.4,120.6"/>
<polygon points="806.7,142.6 775.3,169.7 783.4,174.6 722.7,277.3 728.7,280.8 790,178.3 797.9,182.9"/></g>
</svg>
</body></html>
